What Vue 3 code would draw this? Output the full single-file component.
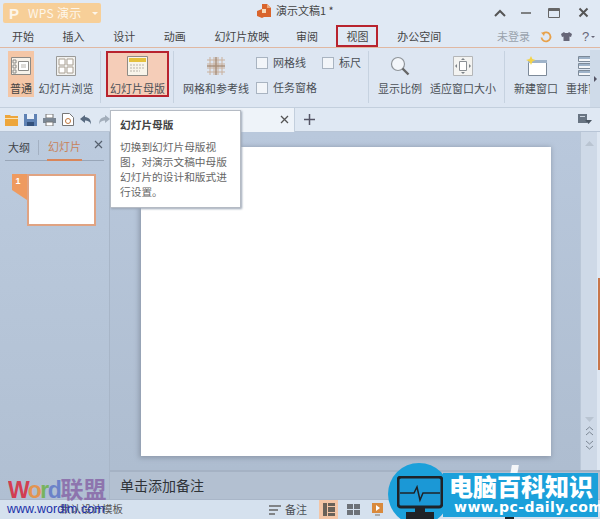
<script setup>
const tabs = ['开始', '插入', '设计', '动画', '幻灯片放映', '审阅', '视图', '办公空间']
const tooltipLines = ['切换到幻灯片母版视', '图，对演示文稿中母版', '幻灯片的设计和版式进', '行设置。']
</script>

<template>
  <div class="app">
    <header class="titlebar">
      <div class="logo">
        <span class="logo-p">P</span>
        <span class="logo-text">WPS 演示</span>
        <span class="logo-arrow"></span>
      </div>
      <div class="doc-title">
        <svg width="16" height="16" viewBox="0 0 16 16">
          <path d="M1 8l5-2V1h5l4 4v9H8l-2 1-5-2z" fill="#d9642c" />
          <path d="M6 6h4v4H6z" fill="#f6d9b8" />
          <path d="M11 1v4h4z" fill="#f0a878" />
        </svg>
        <span>演示文稿1 *</span>
      </div>
      <div class="win-controls">
        <svg width="12" height="8" viewBox="0 0 12 8"><path d="M1 7l5-5 5 5" fill="none" stroke="#555" stroke-width="2" /></svg>
        <svg class="win-min" width="12" height="8" viewBox="0 0 12 8"><path d="M1 4h10" stroke="#666" stroke-width="1.6" /></svg>
        <svg class="win-max" width="12" height="10" viewBox="0 0 12 10"><path d="M.5.5h11v9H.5z" fill="none" stroke="#666" /><path d="M1 2h10" stroke="#666" stroke-width="2" /></svg>
        <svg class="win-close" width="11" height="11" viewBox="0 0 11 11"><path d="M1.5 1.5l8 8M9.5 1.5l-8 8" stroke="#555" stroke-width="2" /></svg>
      </div>
    </header>

    <nav class="tabs">
      <span v-for="t in tabs" :key="t" class="tab" :class="{ marked: t === '视图' }">{{ t }}</span>
      <div class="account">
        <span class="login">未登录</span>
        <svg width="12" height="12" viewBox="0 0 12 12"><path d="M3 2.500a4.500 4.500 0 1 1-1.500 4" fill="none" stroke="#e8a14a" stroke-width="1.800" /><path d="M1 1.500h4l-1 3.500z" fill="#e8a14a" /></svg>
        <svg width="11" height="11" viewBox="0 0 11 11"><path d="M3 1L0 3l1 3 1.500-.5V10h6V5.500L10 6l1-3-3-2-1 1H4z" fill="#667" /></svg>
        <span class="help">?</span>
        <span class="help-arrow"></span>
      </div>
    </nav>

    <section class="ribbon">
      <div class="rb-item active w-normal">
        <svg width="20" height="20" viewBox="0 0 20 20">
          <path d="M.5 1.500h19v17H.5z" fill="#f7f2ea" stroke="#8c8a86" />
          <path d="M2 4h3v3H2zM2 9h3v3H2zM2 14h3v3H2z" fill="none" stroke="#8c8a86" />
          <path d="M7.500 5.500h10v9h-10z" fill="#fff" stroke="#8c8a86" />
          <path d="M10 9h5M10 11h5" stroke="#b9b4ad" />
        </svg>
        <span>普通</span>
      </div>
      <div class="rb-item w-browse">
        <svg width="20" height="20" viewBox="0 0 20 20">
          <path d="M.5.500h19v19H.5z" fill="#f1f1ef" stroke="#9a9a98" />
          <path d="M3 3h6v6H3zM11 3h6v6h-6zM3 11h6v6H3zM11 11h6v6h-6z" fill="#fff" stroke="#a89f92" />
        </svg>
        <span>幻灯片浏览</span>
      </div>
      <i class="sep sep-first"></i>
      <div class="rb-item master">
        <svg width="21" height="20" viewBox="0 0 21 20">
          <path d="M.5.500h20v19H.5z" fill="#f8f4ea" stroke="#8f8c86" />
          <path d="M2 2h17v4H2z" fill="#e5c13e" />
          <path d="M3 9h15M3 12h15M3 15h10" stroke="#b8b3aa" stroke-dasharray="2 1" />
        </svg>
        <span>幻灯片母版</span>
      </div>
      <i class="sep sep-master"></i>
      <div class="rb-item w-grid">
        <svg width="20" height="20" viewBox="0 0 20 20">
          <path d="M4 1v18M8 1v18M12 1v18M16 1v18M1 4h18M1 8h18M1 12h18M1 16h18" stroke="#c9b09c" />
          <path d="M1 10h18M10 1v18" stroke="#a98e78" stroke-width="1.500" />
        </svg>
        <span>网格和参考线</span>
      </div>
      <div class="checks">
        <label class="check"><i></i>网格线</label>
        <label class="check"><i></i>任务窗格</label>
      </div>
      <label class="check ruler"><i></i>标尺</label>
      <i class="sep sep-view"></i>
      <div class="rb-item w-zoom">
        <svg width="20" height="20" viewBox="0 0 20 20">
          <circle cx="8" cy="8" r="6.500" fill="#f3f6fa" stroke="#8f9499" stroke-width="1.200" />
          <path d="M12.500 12.500l6 6" stroke="#666" stroke-width="2.400" />
        </svg>
        <span>显示比例</span>
      </div>
      <div class="rb-item w-fit">
        <svg width="20" height="20" viewBox="0 0 20 20">
          <path d="M.5.500h19v19H.5z" fill="#f3f3f1" stroke="#b4b6b8" />
          <path d="M6.500 5.500h7v9h-7z" fill="#fff" stroke="#8a8f94" />
          <path d="M10 2l-2 2h4zM10 18l-2-2h4zM2 10l2-2v4zM18 10l-2-2v4z" fill="#7c8288" />
        </svg>
        <span>适应窗口大小</span>
      </div>
      <i class="sep sep-win"></i>
      <div class="rb-item w-new">
        <svg width="22" height="20" viewBox="0 0 22 20">
          <path d="M3.500 4.500h18v15h-18z" fill="#fff" stroke="#7d8a99" />
          <path d="M3 4h19v3H3z" fill="#9fb3c9" />
          <path d="M6 0l1.400 3L10.500 4 7.500 5.500 6 9 4.500 5.500 1 4l3.500-1z" fill="#f3d34a" />
        </svg>
        <span>新建窗口</span>
      </div>
      <div class="rb-item w-arrange">
        <svg width="20" height="20" viewBox="0 0 20 20">
          <path d="M.5.500h19v5H.5zM.5 7.500h19v5H.5zM.5 14.500h19v5H.5z" fill="#f4f6f9" stroke="#7d8a99" />
          <path d="M1 1h18v2H1zM1 8h18v2H1zM1 15h18v2H1z" fill="#9fb3c9" />
        </svg>
        <span>重排窗口</span>
      </div>
      <div class="rb-scroll"><span></span></div>
    </section>

    <section class="toolbar">
      <div class="qat">
        <svg width="13" height="12" viewBox="0 0 13 12"><path d="M0 1h5l1 1h7v10H0z" fill="#eda63c" /><path d="M0 4h13v1H0z" fill="#fbe3b3" /></svg>
        <svg width="13" height="12" viewBox="0 0 13 12"><path d="M0 0h13v12H0z" fill="#5f82b4" /><path d="M3 0h7v5H3z" fill="#e8eff8" /><path d="M3 8h7v4H3z" fill="#33517c" /></svg>
        <svg width="13" height="12" viewBox="0 0 13 12"><path d="M3 0h7v4H3z" fill="#fff" stroke="#777" /><path d="M0 4h13v5H0z" fill="#7b8794" /><path d="M3 8h7v4H3z" fill="#fff" stroke="#777" /></svg>
        <svg width="12" height="13" viewBox="0 0 12 13"><path d="M.5.500h7l4 4v8H.5z" fill="#fff" stroke="#777" /><circle cx="6" cy="8" r="2.500" fill="none" stroke="#c0763c" /></svg>
        <svg width="12" height="10" viewBox="0 0 12 10"><path d="M5 0L0 4l5 4V5.500c3 0 5 1 6 4 0-5-2-7-6-7.500z" fill="#586a80" /></svg>
        <svg width="12" height="10" viewBox="0 0 12 10"><path d="M7 0l5 4-5 4V5.500c-3 0-5 1-6 4 0-5 2-7 6-7.500z" fill="#a3aebb" /></svg>
      </div>
      <div class="doc-tab">
        <svg width="9" height="9" viewBox="0 0 9 9"><path d="M1 1l7 7M8 1L1 8" stroke="#555" stroke-width="1.300" /></svg>
      </div>
      <svg class="plus" width="11" height="11" viewBox="0 0 11 11"><path d="M5.500 0v11M0 5.500h11" stroke="#556" stroke-width="1.500" /></svg>
      <svg class="panel-menu" width="14" height="11" viewBox="0 0 14 11"><path d="M0 0h9v9H0z" fill="#687482" /><path d="M7 6h7l-3.500 4z" fill="#4a5562" /><path d="M2 2h5v1H2z" fill="#c9d2dd" /></svg>
    </section>

    <div class="workspace">
      <aside class="sidebar">
        <div class="side-tabs">
          <span>大纲</span>
          <i></i>
          <span class="side-active">幻灯片</span>
          <svg width="9" height="9" viewBox="0 0 9 9"><path d="M1 1l7 7M8 1L1 8" stroke="#55606e" stroke-width="1.200" /></svg>
        </div>
        <div class="thumb-row">
          <span class="thumb-no">1</span>
          <div class="thumb"></div>
        </div>
      </aside>

      <main class="editor">
        <div class="canvas-row">
          <div class="stage">
            <div class="slide"></div>
          </div>
          <div class="vscroll">
            <svg width="9" height="5" viewBox="0 0 9 5"><path d="M0 5l4.500-5L9 5z" fill="#b9c4d1" /></svg>
            <div class="vscroll-bottom">
              <svg width="9" height="5" viewBox="0 0 9 5"><path d="M0 0l4.500 5L9 0z" fill="#b9c4d1" /></svg>
              <svg width="9" height="10" viewBox="0 0 9 10"><path d="M1 4l3.500-3L8 4M1 9l3.500-3L8 9" fill="none" stroke="#7d8895" /></svg>
              <svg width="9" height="10" viewBox="0 0 9 10"><path d="M1 1l3.500 3L8 1M1 6l3.500 3L8 6" fill="none" stroke="#7d8895" /></svg>
            </div>
          </div>
        </div>
        <div class="notes">单击添加备注</div>
      </main>
    </div>

    <footer class="statusbar">
      <span class="st-template">默认设计模板</span>
      <svg class="st-notes-icon" width="12" height="10" viewBox="0 0 12 10"><path d="M0 1h12M0 5h9M0 9h6" stroke="#666" stroke-width="1.300" /></svg>
      <span class="st-notes">备注</span>
      <span class="st-btn st-on">
        <svg width="12" height="13" viewBox="0 0 12 13"><path d="M0 0h4v13H0zM5 0h7v3H5zM5 4h7v5H5zM5 10h7v3H5z" fill="#6a6258" /></svg>
      </span>
      <span class="st-btn">
        <svg width="13" height="11" viewBox="0 0 13 11"><path d="M0 0h6v5H0zM7 0h6v5H7zM0 6h6v5H0zM7 6h6v5H7z" fill="#6d7278" /></svg>
      </span>
      <span class="st-btn">
        <svg width="11" height="13" viewBox="0 0 11 13"><path d="M0 0h11v10H0z" fill="#d98a3c" /><path d="M4 2l4 3-4 3z" fill="#fff" /><path d="M3 11h5v2H3z" fill="#aaa" /></svg>
      </span>
    </footer>

    <!-- overlays -->
    <div class="tooltip">
      <strong>幻灯片母版</strong>
      <p v-for="l in tooltipLines" :key="l">{{ l }}</p>
    </div>

    <i class="edge-mark"></i>

    <div class="wm-word">
      <div class="wm-word-title"><b class="c1">W</b><b class="c2">o</b><b class="c3">r</b><b class="c4">d</b><b class="c5">联盟</b></div>
      <div class="wm-word-url">www.wordlm.com</div>
    </div>

    <div class="wm-pc">
      <i class="wm-flake"></i>
      <i class="wm-foot"></i>
      <i class="wm-circle"></i>
      <div class="wm-banner">
        <span class="wm-title">电脑百科知识</span>
        <span class="wm-url">www.pc-daily.com</span>
      </div>
      <svg class="wm-monitor" width="46" height="43" viewBox="0 0 46 43">
        <path d="M4 1h38a3 3 0 0 1 3 3v24a3 3 0 0 1-3 3H4a3 3 0 0 1-3-3V4a3 3 0 0 1 3-3z" fill="#1b98d6" stroke="#1f2328" stroke-width="3" />
        <path d="M18 31h10v5H18zM9 36h28v7H9z" fill="#1f2328" />
        <path d="M3 17h14l3-6 3 13 3-7h17" fill="none" stroke="#1f2328" stroke-width="1.500" />
      </svg>
    </div>
  </div>
</template>

<style scoped>
.app {
  position: relative;
  width: 600px;
  height: 519px;
  overflow: hidden;
  display: flex;
  flex-direction: column;
  background: #dee7f2;
  color: #4a4f55;
  font: 11px/1.2 "Noto Sans CJK SC", "Liberation Sans", sans-serif;
}

/* title */
.titlebar {
  height: 26px;
  display: flex;
  align-items: flex-start;
  background: #e0e9f4;
}
.logo {
  width: 98px;
  height: 20px;
  margin: 3px 0 0 3px;
  display: flex;
  align-items: center;
  background: #f7cf98;
  color: #fdf6ea;
  border-radius: 2px;
}
.logo-p {
  margin-left: 6px;
  font: bold 15px "Liberation Sans", sans-serif;
}
.logo-text {
  margin-left: 9px;
  font-size: 12px;
  letter-spacing: .3px;
  white-space: nowrap;
}
.logo-arrow {
  margin-left: 10px;
  border: 3px solid transparent;
  border-top-color: #fdf6ea;
  margin-top: 3px;
}
.doc-title {
  margin-left: 155px;
  margin-top: 3px;
  width: 110px;
  display: flex;
  align-items: center;
  gap: 4px;
  font-size: 11px;
  color: #444;
}
.win-controls {
  margin-left: auto;
  margin-top: 7px;
  width: 106px;
  display: flex;
  align-items: center;
  color: #555;
}
.win-min { margin-left: 14px; }
.win-max { margin-left: 16px; }
.win-close { margin-left: 18px; }

/* tabs */
.tabs {
  height: 21px;
  display: flex;
  align-items: center;
  padding-left: 0;
  background: #e0e9f4;
  border-bottom: 1px solid #e0b8a2;
  color: #444;
}
.tab {
  position: relative;
  padding: 0 14.300px;
  white-space: nowrap;
}
.tab:first-child { padding-left: 12px; }
.tab:nth-child(5) { margin-right: -2px; }
.marked::after {
  content: "";
  position: absolute;
  left: 4px;
  right: 5px;
  top: -5px;
  bottom: -4px;
  border: 2px solid #b8232e;
}
.account {
  margin-left: auto;
  width: 103px;
  display: flex;
  align-items: center;
  gap: 9px;
}
.login { color: #9aa3ad; width: 33px; white-space: nowrap; margin-right: 1px; }
.help { color: #667; font: 13px "Liberation Sans", sans-serif; margin-left: 1px; }
.help-arrow {
  margin-left: -7px;
  margin-top: 3px;
  border: 2.500px solid transparent;
  border-top-color: #667;
}

/* ribbon */
.ribbon {
  height: 60px;
  display: flex;
  align-items: flex-start;
  padding: 3px 0 0 8px;
  box-sizing: border-box;
  background: #dde6f2;
  border-bottom: 1px solid #c3cfdd;
  position: relative;
}
.rb-item {
  height: 46px;
  flex: none;
  display: flex;
  flex-direction: column;
  align-items: center;
  justify-content: flex-start;
  padding-top: 5px;
  box-sizing: border-box;
  white-space: nowrap;
}
.rb-item span {
  margin-top: auto;
  margin-bottom: 2px;
}
.active { background: #f4c6a6; color: #444; }
.w-normal { width: 26px; }
.w-browse { width: 56px; margin-left: 4px; }
.sep {
  flex: none;
  width: 1px;
  height: 52px;
  background: #c6d2e0;
}
.sep-first { margin-left: 6px; }
.master {
  width: 63px;
  height: 46px;
  margin-left: 5px;
  background: #f5cdb8;
  outline: 2px solid #b8232e;
  outline-offset: -2px;
}
.sep-master { margin-left: 4px; }
.w-grid { width: 66px; margin-left: 9px; }
.checks {
  flex: none;
  margin-left: 7px;
  width: 66px;
  height: 46px;
  display: flex;
  flex-direction: column;
  justify-content: space-between;
  padding: 4px 0 2px;
  box-sizing: border-box;
}
.check {
  display: flex;
  align-items: center;
  gap: 5px;
  white-space: nowrap;
  height: 15px;
}
.check i {
  width: 10px;
  height: 10px;
  background: #f2f5f9;
  border: 1px solid #a9b4c1;
}
.ruler { flex: none; margin-top: 4px; width: 45px; }
.sep-view { margin-left: 1px; }
.w-zoom { width: 44px; margin-left: 9px; }
.w-fit { width: 66px; margin-left: 8px; }
.sep-win { margin-left: 8px; }
.w-new { width: 44px; margin-left: 9px; }
.w-arrange { width: 44px; margin-left: 8px; }
.rb-scroll {
  position: absolute;
  right: 0;
  top: 2px;
  bottom: 0;
  width: 10px;
  background: #cfdbe9;
  display: flex;
  align-items: center;
  justify-content: center;
}
.rb-scroll span {
  border: 3px solid transparent;
  border-left-color: #556;
  margin-left: 3px;
}

/* quick access row */
.toolbar {
  height: 24px;
  display: flex;
  align-items: center;
  background: #dfe8f3;
  border-bottom: 1px solid #b8c5d6;
  box-sizing: border-box;
}
.qat {
  width: 110px;
  flex: none;
  padding-left: 5px;
  box-sizing: border-box;
  display: flex;
  align-items: center;
  gap: 6px;
}
.doc-tab {
  width: 185px;
  height: 24px;
  flex: none;
  display: flex;
  align-items: center;
  justify-content: flex-end;
  padding-right: 5px;
  box-sizing: border-box;
  background: #eef3f9;
  border-right: 1px solid #c3cfdd;
}
.plus { margin-left: 9px; }
.panel-menu { margin-left: auto; margin-right: 8px; }

/* workspace */
.workspace {
  flex: 1;
  min-height: 0;
  display: flex;
}
.sidebar {
  width: 109px;
  flex: none;
  border-right: 1px solid #a8b6c8;
  background: linear-gradient(#bccbde, #b0bfd2);
  box-sizing: content-box;
}
.side-tabs {
  height: 29px;
  margin: 0 5px;
  padding: 3px 0 0 3px;
  box-sizing: border-box;
  display: flex;
  align-items: center;
  gap: 8px;
  border-bottom: 1px solid #98a6b8;
  color: #3f444a;
  position: relative;
}
.side-tabs i {
  width: 1px;
  height: 15px;
  background: #a3b0c2;
}
.side-tabs svg {
  position: absolute;
  right: 1px;
  top: 8px;
}
.side-active {
  color: #c8835a;
  align-self: stretch;
  display: flex;
  align-items: center;
  border-bottom: 2px solid #d9865a;
  padding: 0 1px;
  margin-bottom: -1px;
}
.thumb-row {
  display: flex;
  align-items: flex-start;
  margin: 13px 0 0 12px;
}
.thumb-no {
  width: 15px;
  height: 26px;
  background: #ee9a5f;
  color: #fff;
  font: bold 9px/14px "Liberation Sans", sans-serif;
  text-align: center;
  padding-right: 3px;
  box-sizing: border-box;
  clip-path: polygon(0 0, 100% 0, 100% 100%, 0 62%);
}
.thumb {
  width: 69px;
  height: 52px;
  box-sizing: border-box;
  background: #fff;
  border: 2px solid #e0a382;
}
.editor {
  flex: 1;
  min-width: 0;
  display: flex;
  flex-direction: column;
}
.canvas-row {
  flex: 1;
  min-height: 0;
  display: flex;
}
.stage {
  flex: 1;
  min-width: 0;
  padding: 15px 29px 14px 31px;
  display: flex;
  background: linear-gradient(#b9c8dc, #aebdd0);
  box-sizing: border-box;
}
.slide {
  flex: 1;
  background: #fff;
  box-shadow: -1px 1px 5px 1px #8d99ab;
}
.vscroll {
  width: 17px;
  flex: none;
  margin-right: 3px;
  background: #ced9e7;
  border-left: 1px solid #bac7d7;
  box-sizing: border-box;
  display: flex;
  flex-direction: column;
  align-items: center;
  padding: 9px 0 20px;
  justify-content: space-between;
}
.vscroll-bottom {
  display: flex;
  flex-direction: column;
  align-items: center;
  gap: 4px;
}
.notes {
  height: 29px;
  flex: none;
  padding-left: 10px;
  display: flex;
  align-items: center;
  box-sizing: border-box;
  background: #b3c0d1;
  border-top: 2px solid #a5b2c4;
  color: #2f3338;
  font-size: 14px;
}

/* status */
.statusbar {
  height: 20px;
  flex: none;
  display: flex;
  align-items: center;
  background: #d5e1ee;
  border-top: 1px solid #a9b6c8;
  box-sizing: border-box;
}
.st-template {
  margin-left: 60px;
  width: 209px;
  color: #555;
  font-size: 10.500px;
}
.st-notes { margin-left: 4px; width: 34px; }
.st-btn {
  width: 19px;
  height: 19px;
  margin-right: 5.500px;
  display: flex;
  align-items: center;
  justify-content: center;
}
.st-on { background: #f4c6a6; }

/* tooltip */
.tooltip {
  position: absolute;
  left: 110px;
  top: 110px;
  width: 131px;
  height: 98px;
  box-sizing: border-box;
  padding: 6px 0 0 9px;
  background: #fff;
  border: 1px solid #b5bbc4;
  box-shadow: 1px 1px 2px #9aa5b4;
  color: #666;
  font-size: 10.700px;
  line-height: 15px;
  white-space: nowrap;
}
.tooltip strong {
  display: block;
  margin-bottom: 7px;
  font-weight: 700;
  color: #444;
}
.tooltip p { margin: 0; }

.edge-mark {
  position: absolute;
  right: 0;
  top: 278px;
  width: 2px;
  height: 92px;
  background: #c8764a;
}

/* word watermark */
.wm-word {
  position: absolute;
  left: 8px;
  top: 477px;
  white-space: nowrap;
}
.wm-word-title {
  font: bold 23px/27px "Liberation Sans", "Noto Sans CJK SC", sans-serif;
  opacity: .85;
  letter-spacing: -1.500px;
}
.wm-word-title b { font-weight: 700; }
.c1 { color: #d8283c; }
.c2 { color: #eb8d3a; }
.c3 { color: #6db24a; }
.c4 { color: #5f78c8; }
.c5 { color: #8868a8; letter-spacing: 0; }
.wm-word-url {
  margin-top: -2px;
  margin-left: -1px;
  color: #1a2ea8;
  font: 12.400px/14px "Liberation Sans", sans-serif;
  letter-spacing: .1px;
}

/* pc-daily watermark */
.wm-pc {
  position: absolute;
  left: 388px;
  top: 463px;
  width: 212px;
  height: 56px;
}
.wm-circle {
  position: absolute;
  left: 0;
  top: 0;
  width: 62px;
  height: 62px;
  border-radius: 50%;
  background: #1ba0da;
}
.wm-banner {
  position: absolute;
  left: 55px;
  top: 10px;
  width: 155px;
  height: 44px;
  background: #1ba0da;
  color: #fff;
  display: flex;
  flex-direction: column;
  padding-left: 6px;
  box-sizing: border-box;
}
.wm-title {
  font: 900 24px/26px "Noto Sans CJK SC", sans-serif;
  white-space: nowrap;
}
.wm-url {
  font: bold 14px/16px "DejaVu Sans", sans-serif;
  margin-left: 5px;
  letter-spacing: .45px;
  white-space: nowrap;
}
.wm-monitor {
  position: absolute;
  left: 9px;
  top: 13px;
}
.wm-flake {
  position: absolute;
  left: 123px;
  top: 2px;
  width: 7px;
  height: 10px;
  background: #f4f6f8;
  transform: skewX(-10deg);
}
.wm-foot {
  position: absolute;
  left: 117px;
  top: 54px;
  width: 9px;
  height: 2px;
  background: #1f2328;
}
</style>
